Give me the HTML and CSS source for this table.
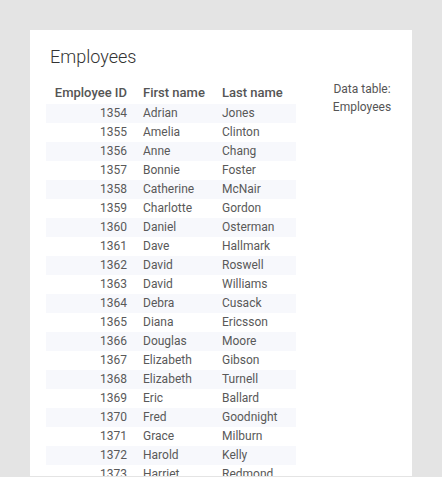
FILE: index.html
```html
<!DOCTYPE html>
<html>
<head>
<meta charset="utf-8">
<link rel="stylesheet" href="styles.css">
</head>
<body>
<div class="card">
  <h1 class="title">Employees</h1>
  <div class="content">
    <table class="grid">
      <thead>
        <tr><th class="c1">Employee ID</th><th class="c2">First name</th><th class="c3">Last name</th></tr>
      </thead>
      <tbody>
        <tr><td class="c1">1354</td><td>Adrian</td><td>Jones</td></tr>
        <tr><td class="c1">1355</td><td>Amelia</td><td>Clinton</td></tr>
        <tr><td class="c1">1356</td><td>Anne</td><td>Chang</td></tr>
        <tr><td class="c1">1357</td><td>Bonnie</td><td>Foster</td></tr>
        <tr><td class="c1">1358</td><td>Catherine</td><td>McNair</td></tr>
        <tr><td class="c1">1359</td><td>Charlotte</td><td>Gordon</td></tr>
        <tr><td class="c1">1360</td><td>Daniel</td><td>Osterman</td></tr>
        <tr><td class="c1">1361</td><td>Dave</td><td>Hallmark</td></tr>
        <tr><td class="c1">1362</td><td>David</td><td>Roswell</td></tr>
        <tr><td class="c1">1363</td><td>David</td><td>Williams</td></tr>
        <tr><td class="c1">1364</td><td>Debra</td><td>Cusack</td></tr>
        <tr><td class="c1">1365</td><td>Diana</td><td>Ericsson</td></tr>
        <tr><td class="c1">1366</td><td>Douglas</td><td>Moore</td></tr>
        <tr><td class="c1">1367</td><td>Elizabeth</td><td>Gibson</td></tr>
        <tr><td class="c1">1368</td><td>Elizabeth</td><td>Turnell</td></tr>
        <tr><td class="c1">1369</td><td>Eric</td><td>Ballard</td></tr>
        <tr><td class="c1">1370</td><td>Fred</td><td>Goodnight</td></tr>
        <tr><td class="c1">1371</td><td>Grace</td><td>Milburn</td></tr>
        <tr><td class="c1">1372</td><td>Harold</td><td>Kelly</td></tr>
        <tr><td class="c1">1373</td><td>Harriet</td><td>Redmond</td></tr>
        <tr><td class="c1">1374</td><td>Henry</td><td>Dawson</td></tr>
      </tbody>
    </table>
    <div class="side">Data table:<br>Employees</div>
  </div>
</div>
</body>
</html>
```
FILE: styles.css
```css
html, body {
  margin: 0;
  height: 100%;
}
body {
  background: #e4e4e4;
  padding: 30px 30px 1px 30px;
  box-sizing: border-box;
  font-family: Roboto, "Liberation Sans", sans-serif;
}
.card {
  background: #ffffff;
  height: 100%;
  overflow: hidden;
  padding: 15px 0 0 16px;
  box-sizing: border-box;
}
.title {
  margin: 0;
  padding-left: 4px;
  font-size: 18px;
  font-weight: 300;
  line-height: 24px;
  color: #333;
}
.content {
  margin-top: 7px;
  display: flex;
  justify-content: space-between;
  align-items: flex-start;
}
.grid {
  border-collapse: collapse;
  width: 250px;
  margin-top: 7px;
  table-layout: fixed;
}
.grid th {
  font-size: 13px;
  font-weight: 500;
  color: #555;
  height: 21px;
  line-height: 20px;
  padding: 0 8px 1px 8px;
  box-sizing: border-box;
  text-align: left;
  white-space: nowrap;
}
.grid td {
  font-size: 12px;
  color: #595959;
  height: 19px;
  line-height: 19px;
  padding: 0 8px;
  white-space: nowrap;
}
.grid .c1 {
  width: 89px;
  text-align: right;
  box-sizing: border-box;
}
.grid .c2 {
  width: 79px;
  box-sizing: border-box;
}
.grid .c3 {
  width: 82px;
  box-sizing: border-box;
}
.grid tbody tr:nth-child(odd) td {
  background: #f7f8fc;
}
.side {
  width: 100px;
  margin-top: 4px;
  text-align: center;
  font-size: 12px;
  line-height: 18px;
  color: #555;
}
```
